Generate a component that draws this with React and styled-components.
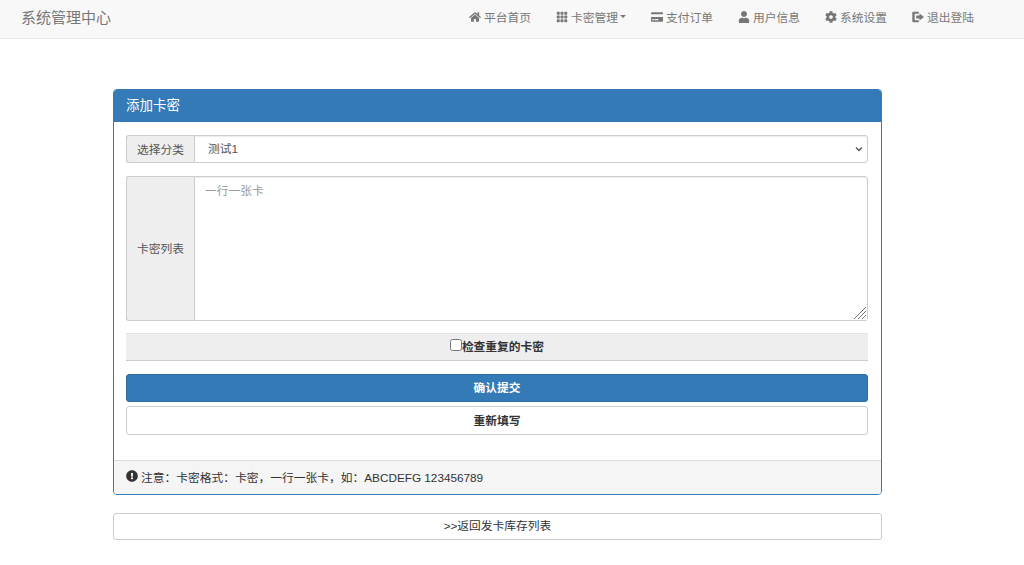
import React from "react";
import styled, { createGlobalStyle } from "styled-components";
import { FaHome, FaCreditCard, FaUser, FaCog, FaExclamationCircle } from "react-icons/fa";
import { BsGrid3X3GapFill } from "react-icons/bs";

const GlobalStyle = createGlobalStyle`
  html, body {
    margin: 0;
    background: #fff;
    color: #333;
    font-family: "Liberation Sans", "Noto Sans CJK SC", sans-serif;
    font-size: 11.75px;
  }
  * { box-sizing: border-box; }
`;

const Navbar = styled.nav`
  display: flex;
  align-items: center;
  justify-content: space-between;
  height: 39px;
  padding: 0 50px 5px 21px;
  background: #f8f8f8;
  border-bottom: 1px solid #e7e7e7;
`;

const Brand = styled.a`
  font-size: 15px;
  color: #777;
`;

const NavList = styled.div`
  display: flex;
  align-items: center;
  gap: 25px;
`;

const NavItem = styled.a`
  display: flex;
  align-items: center;
  gap: 3px;
  color: #777;
  white-space: nowrap;

  svg {
    width: 12px;
    height: 12px;
    flex: none;
  }
`;

const Caret = styled.span`
  width: 0;
  height: 0;
  margin-left: -1px;
  border-top: 3px solid #777;
  border-left: 3px solid transparent;
  border-right: 3px solid transparent;
`;

const Main = styled.main`
  width: 769px;
  margin: 50px 0 0 113px;
`;

const Panel = styled.section`
  border: 1px solid #337ab7;
  border-radius: 4px;
  overflow: hidden;
`;

const PanelHeading = styled.h3`
  margin: 0;
  height: 32px;
  padding: 0 12px;
  background: #337ab7;
  color: #fff;
  font-size: 13.5px;
  font-weight: 400;
  line-height: 31px;
`;

const PanelBody = styled.div`
  display: flex;
  flex-direction: column;
  padding: 13px 13px 25px 12px;
`;

const InputGroup = styled.div`
  display: flex;
  height: ${(p) => p.$height}px;
  margin-bottom: ${(p) => p.$gap}px;
`;

const Addon = styled.label`
  display: flex;
  align-items: center;
  justify-content: center;
  flex: none;
  width: 68px;
  padding-bottom: 2px;
  background: #eee;
  border: 1px solid #ccc;
  border-right: 0;
  border-radius: 3px 0 0 3px;
  color: #555;
`;

const Field = styled.div`
  position: relative;
  display: flex;
  flex: 1;
  min-width: 0;
`;

const Select = styled.select`
  flex: 1;
  min-width: 0;
  padding: 0 9px 1px 13px;
  appearance: none;
  background-color: #fff;
  border: 1px solid #ccc;
  border-radius: 0 3px 3px 0;
  color: #555;
  font: inherit;
  box-shadow: inset 0 1px 1px rgba(0, 0, 0, 0.075);
`;

const Chevron = styled.svg`
  position: absolute;
  top: 11px;
  right: 5px;
  width: 8px;
  height: 6px;
  pointer-events: none;
`;

const Textarea = styled.textarea`
  flex: 1;
  min-width: 0;
  padding: 4px 10px;
  border: 1px solid #ccc;
  border-radius: 0 3px 3px 0;
  color: #555;
  font: inherit;
  outline: none;
  box-shadow: inset 0 1px 1px rgba(0, 0, 0, 0.075);

  &::placeholder {
    color: #999;
  }
`;

const Grip = styled.svg`
  position: absolute;
  right: 1px;
  bottom: 1px;
  width: 15px;
  height: 15px;
  background: #fff;
  pointer-events: none;
`;

const CheckRow = styled.label`
  display: flex;
  align-items: center;
  justify-content: center;
  height: 28px;
  margin-bottom: 13px;
  padding-bottom: 4px;
  background: #eee;
  border-top: 1px solid #e4e4e4;
  border-bottom: 1px solid #ccc;
  color: #333;
  font-weight: 700;

  input {
    width: 12px;
    height: 12px;
    margin: 0;
  }
`;

const Button = styled.button`
  display: block;
  width: 100%;
  height: ${(p) => p.$height || 28}px;
  margin-bottom: ${(p) => p.$gap || 0}px;
  padding: 0 0 ${(p) => p.$lift || 4}px;
  background: ${(p) => (p.$primary ? "#337ab7" : "#fff")};
  border: 1px solid ${(p) => (p.$primary ? "#2e6da4" : "#ccc")};
  border-radius: 3px;
  color: ${(p) => (p.$primary ? "#fff" : "#333")};
  font: inherit;
  font-weight: ${(p) => (p.$bold ? 700 : 400)};
`;

const PanelFooter = styled.footer`
  display: flex;
  align-items: center;
  gap: 3px;
  height: 34px;
  padding: 0 12px 3px;
  background: #f5f5f5;
  border-top: 1px solid #ddd;

  svg {
    width: 12px;
    height: 12px;
  }
`;

const ReturnWrap = styled.div`
  margin-top: 18px;
`;

const LogoutIcon = () => (
  <svg viewBox="0 0 16 16" fill="currentColor">
    <path d="M2 1h7v2.6H3.6v8.8H9V15H2a1.6 1.6 0 0 1-1.6-1.6V2.6A1.6 1.6 0 0 1 2 1z" />
    <path d="M10 3.2 16 8l-6 4.8V10H5.6V6H10z" />
  </svg>
);

const navItems = [
  { icon: <FaHome />, label: "平台首页" },
  { icon: <BsGrid3X3GapFill />, label: "卡密管理", caret: true },
  { icon: <FaCreditCard />, label: "支付订单" },
  { icon: <FaUser />, label: "用户信息" },
  { icon: <FaCog />, label: "系统设置" },
  { icon: <LogoutIcon />, label: "退出登陆" },
];

const App = () => {
  return (
    <>
      <GlobalStyle />
      <Navbar>
        <Brand>系统管理中心</Brand>
        <NavList>
          {navItems.map((item) => (
            <NavItem key={item.label}>
              {item.icon}
              {item.label}
              {item.caret && <Caret />}
            </NavItem>
          ))}
        </NavList>
      </Navbar>

      <Main>
        <Panel>
          <PanelHeading>添加卡密</PanelHeading>
          <PanelBody>
            <InputGroup $height={28} $gap={13}>
              <Addon>选择分类</Addon>
              <Field>
                <Select defaultValue="1">
                  <option value="1">测试1</option>
                </Select>
                <Chevron viewBox="0 0 8 6" fill="none" stroke="#555" strokeWidth="1.4">
                  <path d="M1 1.5 4 4.5 7 1.5" />
                </Chevron>
              </Field>
            </InputGroup>
            <InputGroup $height={145} $gap={12}>
              <Addon>卡密列表</Addon>
              <Field>
                <Textarea placeholder="一行一张卡" />
                <Grip viewBox="0 0 15 15" fill="none" stroke="#777" strokeWidth="1">
                  <path d="M2 14 14 2M6 14 14 6M10 14 14 10" />
                </Grip>
              </Field>
            </InputGroup>
            <CheckRow>
              <input type="checkbox" />
              检查重复的卡密
            </CheckRow>
            <Button $primary $bold $gap={4}>确认提交</Button>
            <Button $bold $height={29} $lift={2}>重新填写</Button>
          </PanelBody>
          <PanelFooter>
            <FaExclamationCircle />
            注意：卡密格式：卡密，一行一张卡，如：ABCDEFG 123456789
          </PanelFooter>
        </Panel>
        <ReturnWrap>
          <Button $height={27}>&gt;&gt;返回发卡库存列表</Button>
        </ReturnWrap>
      </Main>
    </>
  );
};

export default App;
